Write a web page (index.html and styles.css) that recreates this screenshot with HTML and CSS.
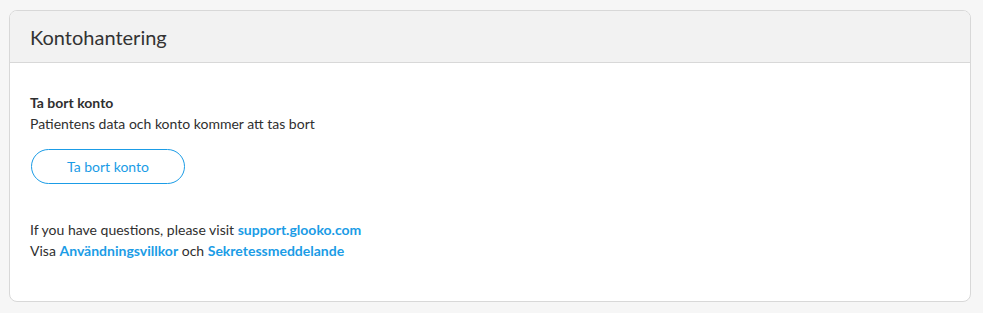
FILE: index.html
```html
<!DOCTYPE html>
<html lang="sv">
<head>
<meta charset="utf-8">
<title>Kontohantering</title>
<link rel="stylesheet" href="styles.css">
</head>
<body>
<section class="card">
  <header class="card-header">
    <h1 class="card-title">Kontohantering</h1>
  </header>
  <div class="card-body">
    <div class="delete-block">
      <h2 class="block-title">Ta bort konto</h2>
      <p class="block-text">Patientens data och konto kommer att tas bort</p>
      <button class="btn-outline" type="button">Ta bort konto</button>
    </div>
    <div class="info">
      <p>If you have questions, please visit <a href="#">support.glooko.com</a></p>
      <p>Visa <a href="#">Användningsvillkor</a> och <a href="#">Sekretessmeddelande</a></p>
    </div>
  </div>
</section>
</body>
</html>
```
FILE: styles.css
```css
html, body {
  margin: 0;
  background: #f6f6f6;
}
body {
  padding: 10px 12px 0 9px;
  font-family: Lato, "Open Sans", sans-serif;
  color: #2f2f2f;
}
.card {
  background: #fff;
  border: 1px solid #d8d8d8;
  border-radius: 8px;
  overflow: hidden;
  height: 292px;
  box-sizing: border-box;
}
.card-header {
  background: #f2f2f2;
  border-bottom: 1px solid #d8d8d8;
  height: 52px;
  box-sizing: border-box;
  display: flex;
  align-items: center;
  padding: 0 20px;
}
.card-title {
  margin: 0;
  font-size: 20px;
  font-weight: 400;
  color: #333;
}
.card-body {
  padding: 30px 20px 0;
}
.block-title {
  margin: 0;
  font-size: 14px;
  font-weight: 700;
  line-height: 20px;
}
.block-text {
  margin: 0;
  font-size: 14px;
  line-height: 22px;
}
.btn-outline {
  margin: 14px 0 0 1px;
  width: 154px;
  height: 35px;
  border: 1px solid #1b9ce6;
  border-radius: 18px;
  background: #fff;
  color: #1b9ce6;
  font-family: Lato, "Open Sans", sans-serif;
  font-size: 14px;
  padding: 0;
}
.info {
  margin-top: 35px;
}
.info p {
  margin: 0;
  font-size: 14px;
  line-height: 21px;
}
.info a {
  color: #1b9ce6;
  font-weight: 700;
  text-decoration: none;
}
```
